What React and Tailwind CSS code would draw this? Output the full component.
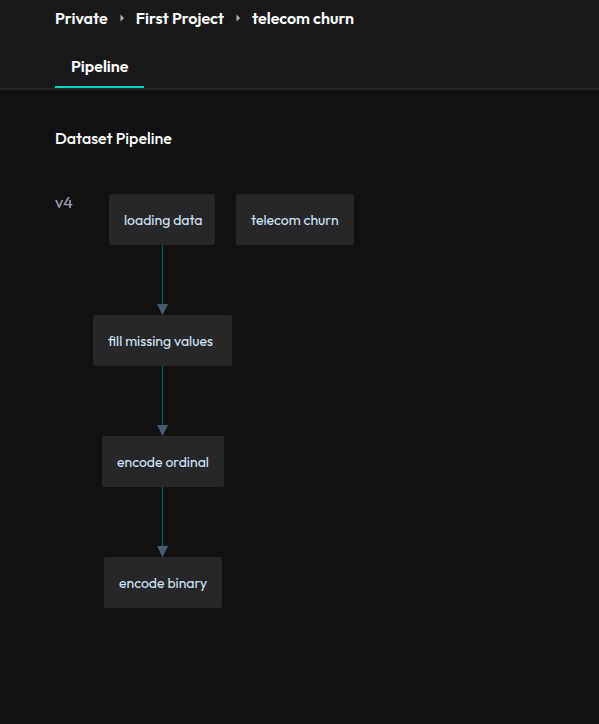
const crumbs = ["Private", "First Project", "telecom churn"];

const nodes = [
  { label: "loading data", place: "left-[16px] top-0 w-[106px]" },
  { label: "telecom churn", place: "left-[143px] top-0 w-[118px]" },
  { label: "fill missing values", place: "left-0 top-[121px] w-[139px]" },
  { label: "encode ordinal", place: "left-[9px] top-[242px] w-[122px]" },
  { label: "encode binary", place: "left-[11px] top-[363px] w-[118px]" },
];

const edges = [51, 172, 293];

function Separator() {
  return (
    <svg className="h-2 w-7 shrink-0 fill-[#b4b4bc]" viewBox="0 0 28 8" aria-hidden="true">
      <path d="M12.5 .5v7l3.5-3.5z" />
    </svg>
  );
}

export default function App() {
  return (
    <div className="flex min-h-screen flex-col bg-[#121214] font-[Outfit,Lato,sans-serif] text-base text-white">
      <header className="border-b-2 border-[#28282a] bg-[#19191b] pl-[55px]">
        <nav aria-label="Breadcrumb" className="pt-[6px]">
          <ol className="flex items-center font-semibold">
            {crumbs.map((name, i) => (
              <li key={name} className="flex items-center whitespace-nowrap">
                {i > 0 && <Separator />}
                <a href={"#" + i}>{name}</a>
              </li>
            ))}
          </ol>
        </nav>
        <div role="tablist" className="flex pt-6">
          <button role="tab" aria-selected="true" className="border-b-2 border-[#00d8c4] px-4 pb-2 font-semibold">
            Pipeline
          </button>
        </div>
      </header>
      <main className="grow px-[55px] pt-9">
        <h1 className="font-medium">Dataset Pipeline</h1>
        <div className="flex pt-11">
          <span className="w-[38px] shrink-0 leading-4 text-[#a1a1aa]">v4</span>
          <div className="relative h-[420px] grow">
            <svg className="absolute left-0 top-0 h-full w-[140px]" aria-hidden="true">
              {edges.map((y) => (
                <g key={y}>
                  <path d={`M69.5 ${y}v60`} stroke="#005f5c" strokeWidth="1.25" />
                  <path d={`M64 ${y + 59}h11l-5.5 11z`} fill="#475c77" />
                </g>
              ))}
            </svg>
            {nodes.map((n) => (
              <div
                key={n.label}
                className={`absolute flex h-[51px] items-center whitespace-nowrap rounded-xs bg-[#272729] px-[15px] text-sm text-[#cfe6fb] ${n.place}`}
              >
                {n.label}
              </div>
            ))}
          </div>
        </div>
      </main>
    </div>
  );
}
